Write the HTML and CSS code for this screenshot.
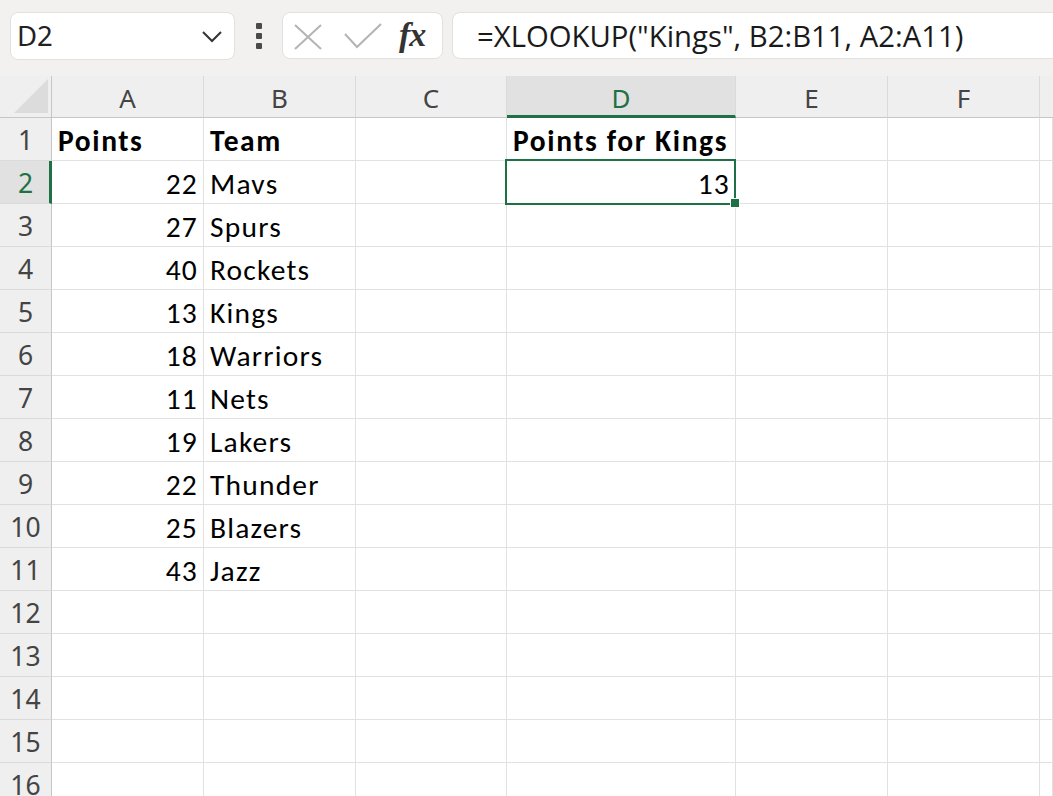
FILE: index.html
```html
<!DOCTYPE html>
<html>
<head>
<meta charset="utf-8">
<link rel="stylesheet" href="styles.css">
</head>
<body>
<div class="toolbar">
  <div class="namebox">
    <span class="nb-text">D2</span>
    <svg class="chev" width="20" height="12" viewBox="0 0 20 12"><path d="M1 1 L10 10 L19 1" fill="none" stroke="#333" stroke-width="2"/></svg>
  </div>
  <div class="dots"><i></i><i></i><i></i></div>
  <div class="fxbox">
    <svg class="ico-x" width="28" height="26" viewBox="0 0 28 26"><path d="M1 1 L27 25 M27 1 L1 25" stroke="#b4b4b4" stroke-width="2" fill="none"/></svg>
    <svg class="ico-check" width="38" height="26" viewBox="0 0 38 26"><path d="M1 11 L13 24 L37 1" stroke="#b4b4b4" stroke-width="2" fill="none"/></svg>
    <span class="fx">fx</span>
  </div>
  <div class="formula">=XLOOKUP("Kings", B2:B11, A2:A11)</div>
</div>
<div class="sheet">
  <div class="corner"><span class="tri"></span></div>
  <div class="ch">A</div>
  <div class="ch">B</div>
  <div class="ch">C</div>
  <div class="ch ch-sel">D</div>
  <div class="ch">E</div>
  <div class="ch">F</div>
  <div class="ch ch-last"></div>

  <div class="rh">1</div>
  <div class="c b">Points</div><div class="c b">Team</div><div class="c"></div><div class="c b">Points for Kings</div><div class="c"></div><div class="c"></div><div class="c"></div>

  <div class="rh rh-sel">2</div>
  <div class="c n">22</div><div class="c">Mavs</div><div class="c"></div><div class="c n sel">13<span class="handle"></span></div><div class="c"></div><div class="c"></div><div class="c"></div>

  <div class="rh">3</div>
  <div class="c n">27</div><div class="c">Spurs</div><div class="c"></div><div class="c"></div><div class="c"></div><div class="c"></div><div class="c"></div>

  <div class="rh">4</div>
  <div class="c n">40</div><div class="c">Rockets</div><div class="c"></div><div class="c"></div><div class="c"></div><div class="c"></div><div class="c"></div>

  <div class="rh">5</div>
  <div class="c n">13</div><div class="c">Kings</div><div class="c"></div><div class="c"></div><div class="c"></div><div class="c"></div><div class="c"></div>

  <div class="rh">6</div>
  <div class="c n">18</div><div class="c">Warriors</div><div class="c"></div><div class="c"></div><div class="c"></div><div class="c"></div><div class="c"></div>

  <div class="rh">7</div>
  <div class="c n">11</div><div class="c">Nets</div><div class="c"></div><div class="c"></div><div class="c"></div><div class="c"></div><div class="c"></div>

  <div class="rh">8</div>
  <div class="c n">19</div><div class="c">Lakers</div><div class="c"></div><div class="c"></div><div class="c"></div><div class="c"></div><div class="c"></div>

  <div class="rh">9</div>
  <div class="c n">22</div><div class="c">Thunder</div><div class="c"></div><div class="c"></div><div class="c"></div><div class="c"></div><div class="c"></div>

  <div class="rh">10</div>
  <div class="c n">25</div><div class="c">Blazers</div><div class="c"></div><div class="c"></div><div class="c"></div><div class="c"></div><div class="c"></div>

  <div class="rh">11</div>
  <div class="c n">43</div><div class="c">Jazz</div><div class="c"></div><div class="c"></div><div class="c"></div><div class="c"></div><div class="c"></div>

  <div class="rh">12</div>
  <div class="c"></div><div class="c"></div><div class="c"></div><div class="c"></div><div class="c"></div><div class="c"></div><div class="c"></div>

  <div class="rh">13</div>
  <div class="c"></div><div class="c"></div><div class="c"></div><div class="c"></div><div class="c"></div><div class="c"></div><div class="c"></div>

  <div class="rh">14</div>
  <div class="c"></div><div class="c"></div><div class="c"></div><div class="c"></div><div class="c"></div><div class="c"></div><div class="c"></div>

  <div class="rh">15</div>
  <div class="c"></div><div class="c"></div><div class="c"></div><div class="c"></div><div class="c"></div><div class="c"></div><div class="c"></div>

  <div class="rh">16</div>
  <div class="c"></div><div class="c"></div><div class="c"></div><div class="c"></div><div class="c"></div><div class="c"></div><div class="c"></div>
</div>
</body>
</html>
```

FILE: styles.css
```css
html, body {
  margin: 0;
  padding: 0;
  background: #ffffff;
  overflow: hidden;
}
body {
  width: 1053px;
  height: 796px;
}

.toolbar {
  height: 76px;
  box-sizing: border-box;
  background: #f3f1f0;
  display: flex;
  align-items: flex-start;
  padding: 12px 0 0 10px;
}

.namebox {
  width: 225px;
  height: 48px;
  box-sizing: border-box;
  background: #fff;
  border: 1px solid #e3e1e0;
  border-radius: 8px;
  display: flex;
  align-items: center;
  justify-content: space-between;
  padding: 0 12px 0 6px;
  font-family: "Noto Sans", "Open Sans", sans-serif;
  font-size: 27.5px;
  color: #222;
}
.nb-text { line-height: 1; }
.chev { display: block; margin-top: 2px; }

.dots {
  width: 47px;
  height: 48px;
  display: flex;
  flex-direction: column;
  align-items: center;
  justify-content: center;
  gap: 4px;
}
.dots i {
  display: block;
  width: 6px;
  height: 6px;
  border-radius: 1px;
  background: #4a4a4a;
}

.fxbox {
  width: 161px;
  height: 47px;
  box-sizing: border-box;
  background: #fff;
  border: 1px solid #e3e1e0;
  border-radius: 8px;
  display: flex;
  align-items: center;
  padding: 0 0 0 11px;
}
.ico-x { display: block; margin-top: 2px; }
.ico-check { display: block; margin-left: 22px; margin-top: 0; }
.fx {
  margin-left: 17px;
  font-family: "Liberation Serif", "DejaVu Serif", serif;
  font-style: italic;
  font-weight: bold;
  font-size: 34px;
  color: #333;
  line-height: 1;
  margin-top: -2px;
  letter-spacing: -1px;
}

.formula {
  flex: 1;
  margin-left: 9px;
  margin-right: -12px;
  height: 47px;
  box-sizing: border-box;
  background: #fff;
  border: 1px solid #e3e1e0;
  border-radius: 8px;
  display: flex;
  align-items: center;
  padding-left: 24px;
  font-family: "Open Sans", "Noto Sans", sans-serif;
  font-size: 29.3px;
  color: #1a1a1a;
  white-space: nowrap;
}

.sheet {
  display: grid;
  grid-template-columns: 52px 152px 152px 151px 229px 152px 152px 13px;
  grid-template-rows: 42px;
  grid-auto-rows: 43px;
}

.corner {
  background: #efefef;
  border-right: 1px solid #c6c6c6;
  border-bottom: 1px solid #c6c6c6;
  box-sizing: border-box;
  position: relative;
}
.tri {
  position: absolute;
  right: 3px;
  bottom: 4px;
  width: 0;
  height: 0;
  border-left: 34px solid transparent;
  border-bottom: 34px solid #dcdcdc;
}

.ch {
  background: #efefef;
  border-right: 1px solid #dadada;
  border-bottom: 1px solid #c6c6c6;
  box-sizing: border-box;
  display: flex;
  align-items: center;
  justify-content: center;
  font-family: "Noto Sans", "Open Sans", sans-serif;
  font-size: 26px;
  color: #444;
  padding-top: 2px;
}
.ch-sel {
  background: #e1e1e1;
  color: #1e7145;
  border-bottom: 3px solid #1e7145;
  padding-top: 5px;
}
.ch-last { border-right: none; }

.rh {
  background: #efefef;
  border-right: 1px solid #c6c6c6;
  border-bottom: 1px solid #dadada;
  box-sizing: border-box;
  display: flex;
  align-items: center;
  justify-content: center;
  font-family: "Noto Sans", "Open Sans", sans-serif;
  font-size: 26.5px;
  color: #444;
  padding-top: 2px;
}
.rh-sel {
  background: #e1e1e1;
  color: #1e7145;
  border-right: 3px solid #1e7145;
  padding-left: 2px;
}

.c {
  border-right: 1px solid #e1e1e1;
  border-bottom: 1px solid #e1e1e1;
  box-sizing: border-box;
  display: flex;
  align-items: flex-end;
  padding: 0 5px 2px 6px;
  font-family: "Carlito", "Lato", sans-serif;
  font-size: 29.5px;
  letter-spacing: 1.2px;
  line-height: 34px;
  color: #000;
  white-space: nowrap;
}
.b {
  font-weight: bold;
  font-size: 29.5px;
  letter-spacing: 1.6px;
}
.n { justify-content: flex-end; }

.sel {
  position: relative;
}
.sel::after {
  content: "";
  position: absolute;
  left: -2px;
  top: -2px;
  right: -1px;
  bottom: -2px;
  border: 2px solid #1e7145;
  pointer-events: none;
}
.handle {
  position: absolute;
  right: -5px;
  bottom: -5px;
  width: 8px;
  height: 8px;
  background: #1e7145;
  border: 1px solid #fff;
  z-index: 2;
}
```
